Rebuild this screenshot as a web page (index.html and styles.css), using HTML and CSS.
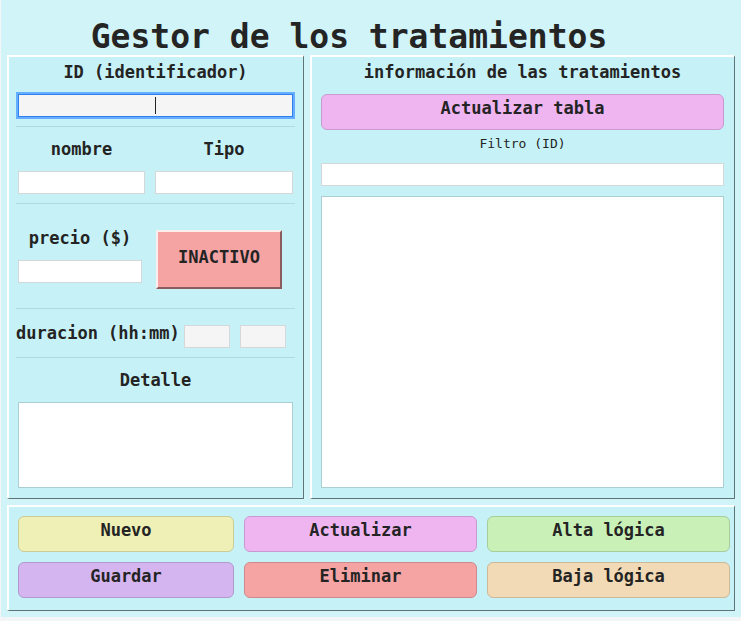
FILE: index.html
```html
<!DOCTYPE html>
<html lang="es">
<head>
<meta charset="utf-8">
<meta name="viewport" content="width=device-width, initial-scale=1">
<title>Gestor de los tratamientos</title>
<link rel="stylesheet" href="styles.css">
</head>
<body>
<main class="app">
  <h1 class="title">Gestor de los tratamientos</h1>
  <div class="columns">
    <form class="panel form">
      <div class="section section-first">
        <label class="label" for="id">ID (identificador)</label>
        <input class="field field-active" id="id" type="text">
      </div>
      <div class="section pair">
        <div>
          <label class="label" for="nombre">nombre</label>
          <input class="field" id="nombre" type="text">
        </div>
        <div>
          <label class="label" for="tipo">Tipo</label>
          <input class="field" id="tipo" type="text">
        </div>
      </div>
      <div class="section price">
        <div>
          <label class="label" for="precio">precio ($)</label>
          <input class="field" id="precio" type="text">
        </div>
        <button class="status" type="button">INACTIVO</button>
      </div>
      <div class="section duration">
        <label class="label" id="duracion" for="horas">duracion (hh:mm)</label>
        <input class="field short" id="horas" type="text">
        <input class="field short" id="minutos" type="text" aria-labelledby="duracion">
      </div>
      <div class="section">
        <label class="label" for="detalle">Detalle</label>
        <textarea class="field area" id="detalle"></textarea>
      </div>
    </form>
    <section class="panel info">
      <h2 class="label">información de las tratamientos</h2>
      <button class="button pink" type="button">Actualizar tabla</button>
      <label class="label small" for="filtro">Filtro (ID)</label>
      <input class="field" id="filtro" type="text">
      <textarea class="field table" aria-label="Tratamientos" readonly></textarea>
    </section>
  </div>
  <div class="panel actions">
    <button class="button yellow" type="button">Nuevo</button>
    <button class="button pink" type="button">Actualizar</button>
    <button class="button green" type="button">Alta lógica</button>
    <button class="button purple" type="button">Guardar</button>
    <button class="button red" type="button">Eliminar</button>
    <button class="button orange" type="button">Baja lógica</button>
  </div>
</main>
</body>
</html>
```
FILE: styles.css
```css
* {
  box-sizing: border-box;
}

body {
  margin: 0;
  padding: 0 0 4px 1px;
  background: #f3f5f6;
  color: #242424;
  font: bold 17px/30px Consolas, "DejaVu Sans Mono", monospace;
}

.app {
  display: flex;
  flex-direction: column;
  gap: 6px;
  padding: 19px 6px 6px;
  background: #d0f4f8;
}

.title {
  margin: 0 0 -6px;
  padding-right: 44px;
  font-size: 33px;
  line-height: 36px;
  text-align: center;
}

.columns {
  display: grid;
  grid-template-columns: 297fr 425fr;
  gap: 6px;
}

.panel {
  min-width: 0;
  border: solid;
  border-width: 2px 1px 1px 2px;
  border-color: #fff #5f7477 #5f7477 #fff;
  border-radius: 1px;
  background: #c6f2f7;
}

.form {
  padding: 0 8px 1px 7px;
}

.section {
  padding: 7px 2px 9px;
  border-top: 1px solid #b1d9de;
}

.section-first {
  padding-top: 0;
  border-top: 0;
}

.label {
  display: block;
  margin: 0 0 7px;
  font-size: 17px;
  line-height: 30px;
  text-align: center;
  white-space: nowrap;
}

.field {
  display: block;
  width: 100%;
  height: 23px;
  padding: 2px 4px;
  border: 1px solid #d5d8d9;
  border-radius: 0;
  outline: 0;
  background: #fff;
  color: inherit;
  font: inherit;
  font-size: 13px;
  line-height: 17px;
}

.field-active {
  border-color: #2f80ed;
  box-shadow: 0 0 0 2px #64adff;
  background: linear-gradient(#242424, #242424) center / 1px 17px no-repeat #f5f5f5;
  text-align: center;
}

.pair {
  display: grid;
  grid-template-columns: 127fr 138fr;
  gap: 10px;
}

.price {
  display: grid;
  grid-template-columns: 124fr 126fr;
  gap: 14px;
  align-items: start;
  padding: 19px 13px 19px 2px;
}

.status {
  height: 59px;
  margin-top: 7px;
  padding: 0 0 6px;
  border: 2px solid;
  border-color: #fdeeee #8b5c5d #8b5c5d #fdeeee;
  background: #f5a3a3;
  color: inherit;
  font: inherit;
}

.duration {
  display: flex;
  gap: 10px;
  align-items: flex-end;
  padding: 9px 0;
}

.duration .label {
  margin: 0 -6px 0 0;
}

.short {
  width: 46px;
  background: #f5f5f5;
}

.area {
  height: 86px;
  border-color: #a9cfd3;
  resize: none;
}

.info {
  display: flex;
  flex-direction: column;
  padding: 0 10px 10px 9px;
}

.small {
  margin-bottom: 5px;
  font-size: 13px;
  font-weight: normal;
  line-height: 28px;
}

.table {
  flex: 1;
  margin-top: 10px;
  border-color: #a9cfd3;
  resize: none;
}

.button {
  height: 36px;
  padding: 0 0 8px;
  border: 1px solid;
  border-radius: 6px;
  color: inherit;
  font: inherit;
  line-height: 26px;
}

.actions {
  display: grid;
  grid-template-columns: 216fr 233fr 243fr;
  gap: 10px;
  padding: 9px 4px 12px 9px;
}

.pink {
  border-color: #c99ad0;
  background: #eeb5f0;
}

.yellow {
  border-color: #cacc98;
  background: #eef0b5;
}

.green {
  border-color: #a7cd9b;
  background: #c9f0b7;
}

.purple {
  border-color: #b09acc;
  background: #d5b5f0;
}

.red {
  border-color: #cc8a8c;
  background: #f5a3a3;
}

.orange {
  border-color: #ccb99a;
  background: #f1dab5;
}
```
